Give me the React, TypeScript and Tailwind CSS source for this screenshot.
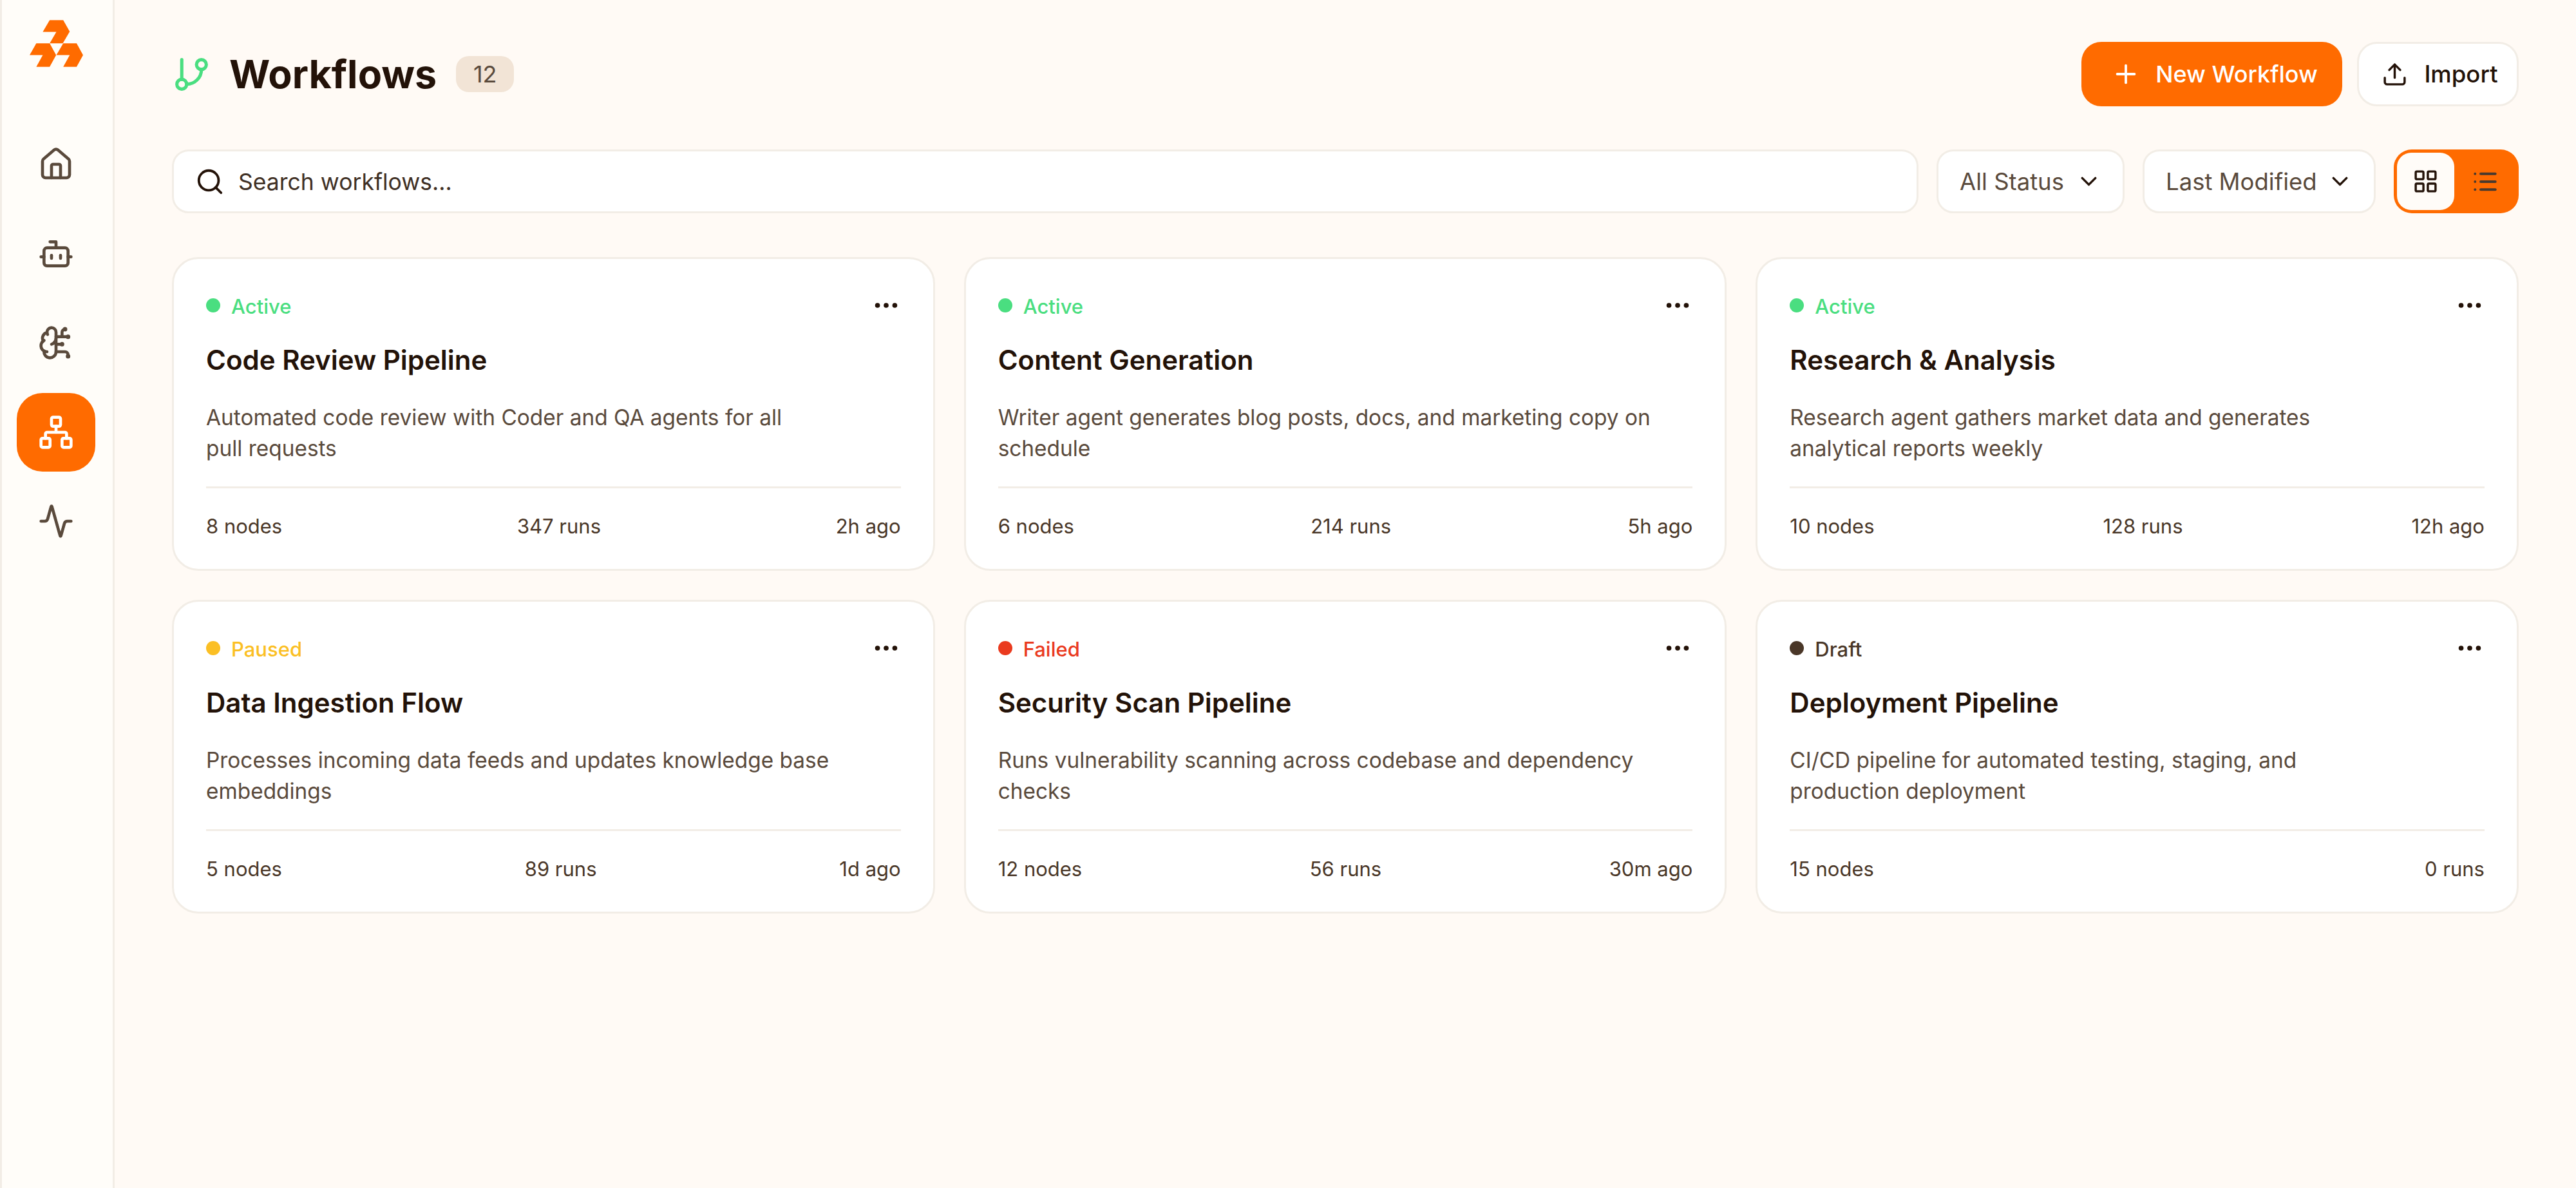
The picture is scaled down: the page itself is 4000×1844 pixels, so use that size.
import { Activity, Bot, BrainCircuit, ChevronDown, Ellipsis, GitBranch, House, LayoutGrid, List, Network, Plus, Search, Upload } from 'lucide-react';

type Status = 'Active' | 'Paused' | 'Failed' | 'Draft';

interface Workflow {
  status: Status;
  title: string;
  description: string;
  stats: string[];
}

const statusStyles: Record<Status, { dot: string; text: string }> = {
  Active: { dot: 'bg-[#4ade80]', text: 'text-[#4ade80]' },
  Paused: { dot: 'bg-[#fbbf24]', text: 'text-[#fbbf24]' },
  Failed: { dot: 'bg-[#ea3a1e]', text: 'text-[#ea3a1e]' },
  Draft: { dot: 'bg-[#4a3728]', text: 'text-[#4a3728]' },
};

const workflows: Workflow[] = [
  {
    status: 'Active',
    title: 'Code Review Pipeline',
    description: 'Automated code review with Coder and QA agents for all\npull requests',
    stats: ['8 nodes', '347 runs', '2h ago'],
  },
  {
    status: 'Active',
    title: 'Content Generation',
    description: 'Writer agent generates blog posts, docs, and marketing copy on\nschedule',
    stats: ['6 nodes', '214 runs', '5h ago'],
  },
  {
    status: 'Active',
    title: 'Research & Analysis',
    description: 'Research agent gathers market data and generates\nanalytical reports weekly',
    stats: ['10 nodes', '128 runs', '12h ago'],
  },
  {
    status: 'Paused',
    title: 'Data Ingestion Flow',
    description: 'Processes incoming data feeds and updates knowledge base\nembeddings',
    stats: ['5 nodes', '89 runs', '1d ago'],
  },
  {
    status: 'Failed',
    title: 'Security Scan Pipeline',
    description: 'Runs vulnerability scanning across codebase and dependency\nchecks',
    stats: ['12 nodes', '56 runs', '30m ago'],
  },
  {
    status: 'Draft',
    title: 'Deployment Pipeline',
    description: 'CI/CD pipeline for automated testing, staging, and\nproduction deployment',
    stats: ['15 nodes', '0 runs'],
  },
];

function Logo() {
  return (
    <svg viewBox="139 95 248 217" className="h-[73px] w-[83px]" fill="#ff6b00">
      <path d="M232 95H295L325 148L293 203H232L263 150H200Z" />
      <path d="M170 203H232L262 257L232 312H170L200 257H139Z" />
      <path d="M295 203H357L387 257L357 312H295L325 257H263Z" />
    </svg>
  );
}

function Sidebar() {
  const items = [
    { icon: House },
    { icon: Bot },
    { icon: BrainCircuit },
    { icon: Network, active: true },
    { icon: Activity },
  ];

  return (
    <aside className="flex w-[178px] shrink-0 flex-col items-center border-x-[3px] border-[#f2ede6] bg-[#fffdf9] pt-[31px] pr-[4px]">
      <Logo />
      <nav className="mt-[90px] flex flex-col gap-[16.5px]">
        {items.map(({ icon: Icon, active }, i) => (
          <div
            key={i}
            className={`flex h-[122px] w-[122px] items-center justify-center rounded-[40px] ${
              active ? 'bg-[#ff6b00] text-white' : 'text-[#5a4a3c]'
            }`}
          >
            <Icon size={56} strokeWidth={2} />
          </div>
        ))}
      </nav>
    </aside>
  );
}

function WorkflowCard({ workflow }: { workflow: Workflow }) {
  const style = statusStyles[workflow.status];

  return (
    <div className="rounded-[41px] border-[3px] border-[#f2ede6] bg-white px-[50px] pt-[51px] pb-[44px]">
      <div className="flex h-[41px] items-center justify-between">
        <div className="flex items-center gap-[17px]">
          <span className={`h-[22px] w-[22px] rounded-full ${style.dot}`} />
          <span className={`mt-[3px] text-[31px] leading-[41px] font-medium ${style.text}`}>{workflow.status}</span>
        </div>
        <Ellipsis size={46} strokeWidth={2} className="text-[#231208]" />
      </div>
      <h3 className="mt-[34px] text-[42px] leading-[61px] font-semibold text-[#231208]">{workflow.title}</h3>
      <p className="mt-[35px] text-[33.4px] leading-[48px] whitespace-pre-line text-[#5a4a3c]">{workflow.description}</p>
      <div className="mt-[35px] flex justify-between border-t-[3px] border-[#f2ede6] pt-[36px] text-[31px] leading-[45px] text-[#4a3728]">
        {workflow.stats.map((stat) => (
          <span key={stat}>{stat}</span>
        ))}
      </div>
    </div>
  );
}

export default function App() {
  return (
    <div className="flex min-h-screen bg-[#fffaf5] font-['Inter',sans-serif]">
      <Sidebar />
      <main className="flex-1 px-[89px] pt-[65px]">
        {/* Header */}
        <div className="flex h-[100px] items-center justify-between">
          <div className="flex items-center">
            <GitBranch size={61} strokeWidth={2} className="text-[#4ade80]" />
            <h1 className="ml-[28px] text-[61px] leading-none font-bold text-[#231208]">Workflows</h1>
            <span className="ml-[30px] flex h-[56px] w-[90px] items-center justify-center rounded-[20px] bg-[#f2e4d6] text-[36px] text-[#5a4a3c]">
              12
            </span>
          </div>
          <div className="flex items-center gap-[23px]">
            <button className="flex h-[100px] w-[405px] items-center justify-center gap-[23px] rounded-[31px] bg-[#ff6b00] pl-[8px] text-[36px] font-medium text-white">
              <Plus size={46} strokeWidth={2} />
              New Workflow
            </button>
            <button className="flex h-[100px] w-[251px] items-center justify-center gap-[25px] rounded-[31px] border-[3px] border-[#f2ede6] bg-white pl-[6px] text-[36.5px] font-medium text-[#231208]">
              <Upload size={41} strokeWidth={2} />
              Import
            </button>
          </div>
        </div>

        {/* Filters */}
        <div className="mt-[67px] flex h-[99px] items-center gap-[28px]">
          <div className="flex h-full flex-1 items-center gap-[21px] rounded-[26px] border-[3px] border-[#f2ede6] bg-white pl-[33px] text-[#3f3025]">
            <Search size={46} strokeWidth={2} className="text-[#231208]" />
            <span className="mt-[2px] text-[35.5px]">Search workflows...</span>
          </div>
          <div className="flex h-full w-[292px] items-center justify-between rounded-[26px] border-[3px] border-[#f2ede6] bg-white pr-[32px] pl-[33px] text-[36.5px] text-[#5a4a3c]">
            <span className="mt-[2px]">All Status</span>
            <ChevronDown size={41} strokeWidth={2} className="text-[#231208]" />
          </div>
          <div className="flex h-full w-[362px] items-center justify-between rounded-[26px] border-[3px] border-[#f2ede6] bg-white pr-[32px] pl-[33px] text-[36.5px] text-[#5a4a3c]">
            <span className="mt-[2px]">Last Modified</span>
            <ChevronDown size={41} strokeWidth={2} className="text-[#231208]" />
          </div>
          <div className="flex h-full w-[194px] items-stretch rounded-[28px] bg-[#ff6b00] p-[5px]">
            <div className="flex w-[89px] items-center justify-center rounded-[22px] bg-[#fffcf8] text-[#231208]">
              <LayoutGrid size={41} strokeWidth={2} />
            </div>
            <div className="flex flex-1 items-center justify-center text-[#4a3a2e]">
              <List size={42} strokeWidth={2.2} />
            </div>
          </div>
        </div>

        {/* Cards */}
        <div className="mt-[68px] grid grid-cols-3 gap-[45px]">
          {workflows.map((workflow) => (
            <WorkflowCard key={workflow.title} workflow={workflow} />
          ))}
        </div>
      </main>
    </div>
  );
}
